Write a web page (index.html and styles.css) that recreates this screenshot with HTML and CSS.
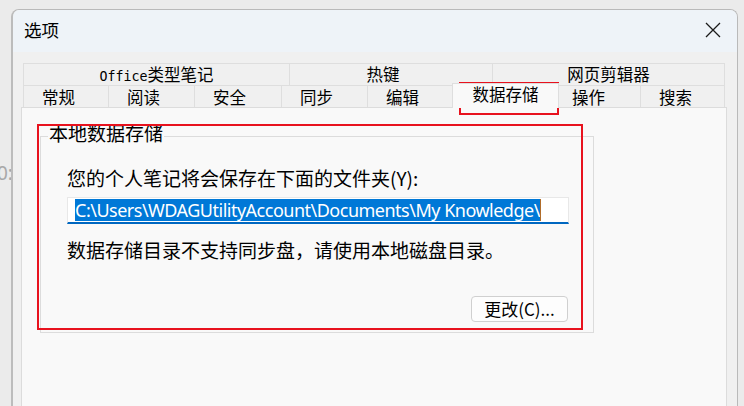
FILE: index.html
```html
<!DOCTYPE html>
<html lang="zh-CN">

<head>
    <meta charset="UTF-8">
    <meta name="viewport" content="width=device-width, initial-scale=1.0">
    <title>选项</title>
    <link rel="stylesheet" href="styles.css">
</head>

<body>
    <div class="behind">0:</div>
    <div class="window">
        <div class="title-bar">
            <div class="title">选项</div>
            <div class="close">
                <svg width="16" height="16" viewBox="0 0 16 16">
                    <path d="M1 1L15 15M15 1L1 15" stroke="#1a1a1a" stroke-width="1.3" fill="none" />
                </svg>
            </div>
        </div>
        <div class="win-body">
            <div class="tabs">
                <div class="tab-row row-top">
                    <div class="tab"><span class="mono">Office</span>类型笔记</div>
                    <div class="tab hotkey">热键</div>
                    <div class="tab">网页剪辑器</div>
                </div>
                <div class="tab-row row-bottom">
                    <div class="tab">常规</div>
                    <div class="tab">阅读</div>
                    <div class="tab">安全</div>
                    <div class="tab">同步</div>
                    <div class="tab">编辑</div>
                    <div class="tab active">数据存储</div>
                    <div class="tab narrow">操作</div>
                    <div class="tab">搜索</div>
                </div>
            </div>
            <div class="panel">
                <div class="group">
                    <div class="group-title">本地数据存储</div>
                    <div class="line first">您的个人笔记将会保存在下面的文件夹(Y):</div>
                    <div class="path-input">
                        <span class="selected">C:\Users\WDAGUtilityAccount\Documents\My Knowledge\</span><span class="caret"></span>
                    </div>
                    <div class="line note">数据存储目录不支持同步盘，请使用本地磁盘目录。</div>
                    <div class="btn-row">
                        <button class="btn">更改(C)...</button>
                    </div>
                </div>
            </div>
        </div>
    </div>
    <!-- 标注框 -->
    <div class="mark mark-tab"></div>
    <div class="mark mark-group"></div>
</body>

</html>
```

FILE: styles.css
```css
* {
    margin: 0;
    padding: 0;
    box-sizing: border-box;
}

body {
    position: relative;
    width: 744px;
    height: 406px;
    overflow: hidden;
    background: #ebebeb;
    font-family: "Noto Sans CJK SC", "Noto Sans", sans-serif;
    color: #000;
    padding: 9px 0 0 11px;
}

.behind {
    position: absolute;
    left: -3px;
    top: 160px;
    font-size: 19px;
    color: #a8a8a8;
    font-family: "Noto Sans", sans-serif;
}

.window {
    position: relative;
    width: 727px;
    height: 397px;
    border: 1px solid #b9b9b9;
    border-left: 2px solid #bcbcbc;
    border-bottom: none;
    border-radius: 8px 8px 0 0;
    background: #f0f0f0;
    overflow: hidden;
}

.title-bar {
    height: 42px;
    display: flex;
    align-items: center;
    justify-content: space-between;
    background: #eef3f8;
    padding: 0 16px 0 11px;
}

.title {
    font-size: 17.5px;
    line-height: 1;
    margin-top: -2px;
}

.close {
    display: flex;
    margin-top: -3px;
}

.win-body {
    padding: 11px 0 0 8px;
}

.tabs {
    margin-left: 2px;
    font-size: 16.5px;
    line-height: 21px;
}

.tab-row {
    display: grid;
}

.row-top {
    grid-template-columns: 266px 203px 233px;
}

.row-bottom {
    grid-template-columns: 85px 86px 87px 86px 85px 106px 82px 85px;
}

.tab {
    text-align: center;
    border-top: 1px solid #dedede;
    border-left: 1px solid #dedede;
    height: 22px;
    background: #f0f0f0;
    white-space: nowrap;
}

.tab:last-child {
    border-right: 1px solid #dedede;
}

.tab.hotkey {
    padding-right: 16px;
}

.mono {
    font-family: "DejaVu Sans Mono", monospace;
    font-size: 13.3px;
}

.row-bottom .tab {
    text-align: left;
    padding: 1px 0 0 18px;
}

.row-bottom .tab.narrow {
    padding-left: 14px;
}

.row-bottom .tab.active {
    position: relative;
    z-index: 1;
    height: 25px;
    margin-top: -2px;
    background: #f9f9f9;
    border-right: 1px solid #dedede;
    padding: 0;
    text-align: center;
    margin-right: -1px;
}

.tab.active + .tab {
    border-left: none;
}

.panel {
    width: 706px;
    height: 320px;
    background: #f9f9f9;
    border: 1px solid #dcdcdc;
    margin-top: -1px;
    padding: 28px 0 0 18px;
}

.group {
    width: 554px;
    border: 1px solid #dcdcdc;
    padding: 0 25px 10px 26px;
    font-size: 19px;
}

.group-title {
    width: fit-content;
    margin: -16px 0 0 -19px;
    padding: 0 1px;
    line-height: 24px;
    background: #f9f9f9;
}

.line {
    line-height: 24px;
    white-space: nowrap;
}

.line.first {
    margin-top: 21px;
}

.path-input {
    margin-top: 7px;
    height: 27px;
    background: #fff;
    border: 1px solid #e8e8e8;
    border-bottom: 2px solid #0067c0;
    padding: 1px 0 0 7px;
    display: flex;
    align-items: flex-start;
    width: 502px;
}

.selected {
    background: #0078d7;
    color: #fff;
    font-family: "Noto Sans", sans-serif;
    font-size: 18px;
    line-height: 22px;
    height: 22px;
    white-space: nowrap;
    letter-spacing: -0.5px;
}

.caret {
    width: 1px;
    height: 22px;
    background: #b06c2a;
}

.line.note {
    margin-top: 14px;
}

.btn-row {
    display: flex;
    justify-content: flex-end;
    margin-top: 34px;
}

.btn {
    width: 97px;
    height: 26px;
    border: 1px solid #d0d0d0;
    border-radius: 4px;
    background: #fdfdfd;
    font-family: "Noto Sans CJK SC", "Noto Sans", sans-serif;
    font-size: 17px;
    line-height: 22px;
    color: #000;
}

.mark {
    position: absolute;
    border: 2px solid #e8121e;
}

.mark-tab {
    left: 459px;
    top: 82px;
    width: 100px;
    height: 33px;
}

.mark-group {
    left: 37px;
    top: 124px;
    width: 546px;
    height: 206px;
}
```
